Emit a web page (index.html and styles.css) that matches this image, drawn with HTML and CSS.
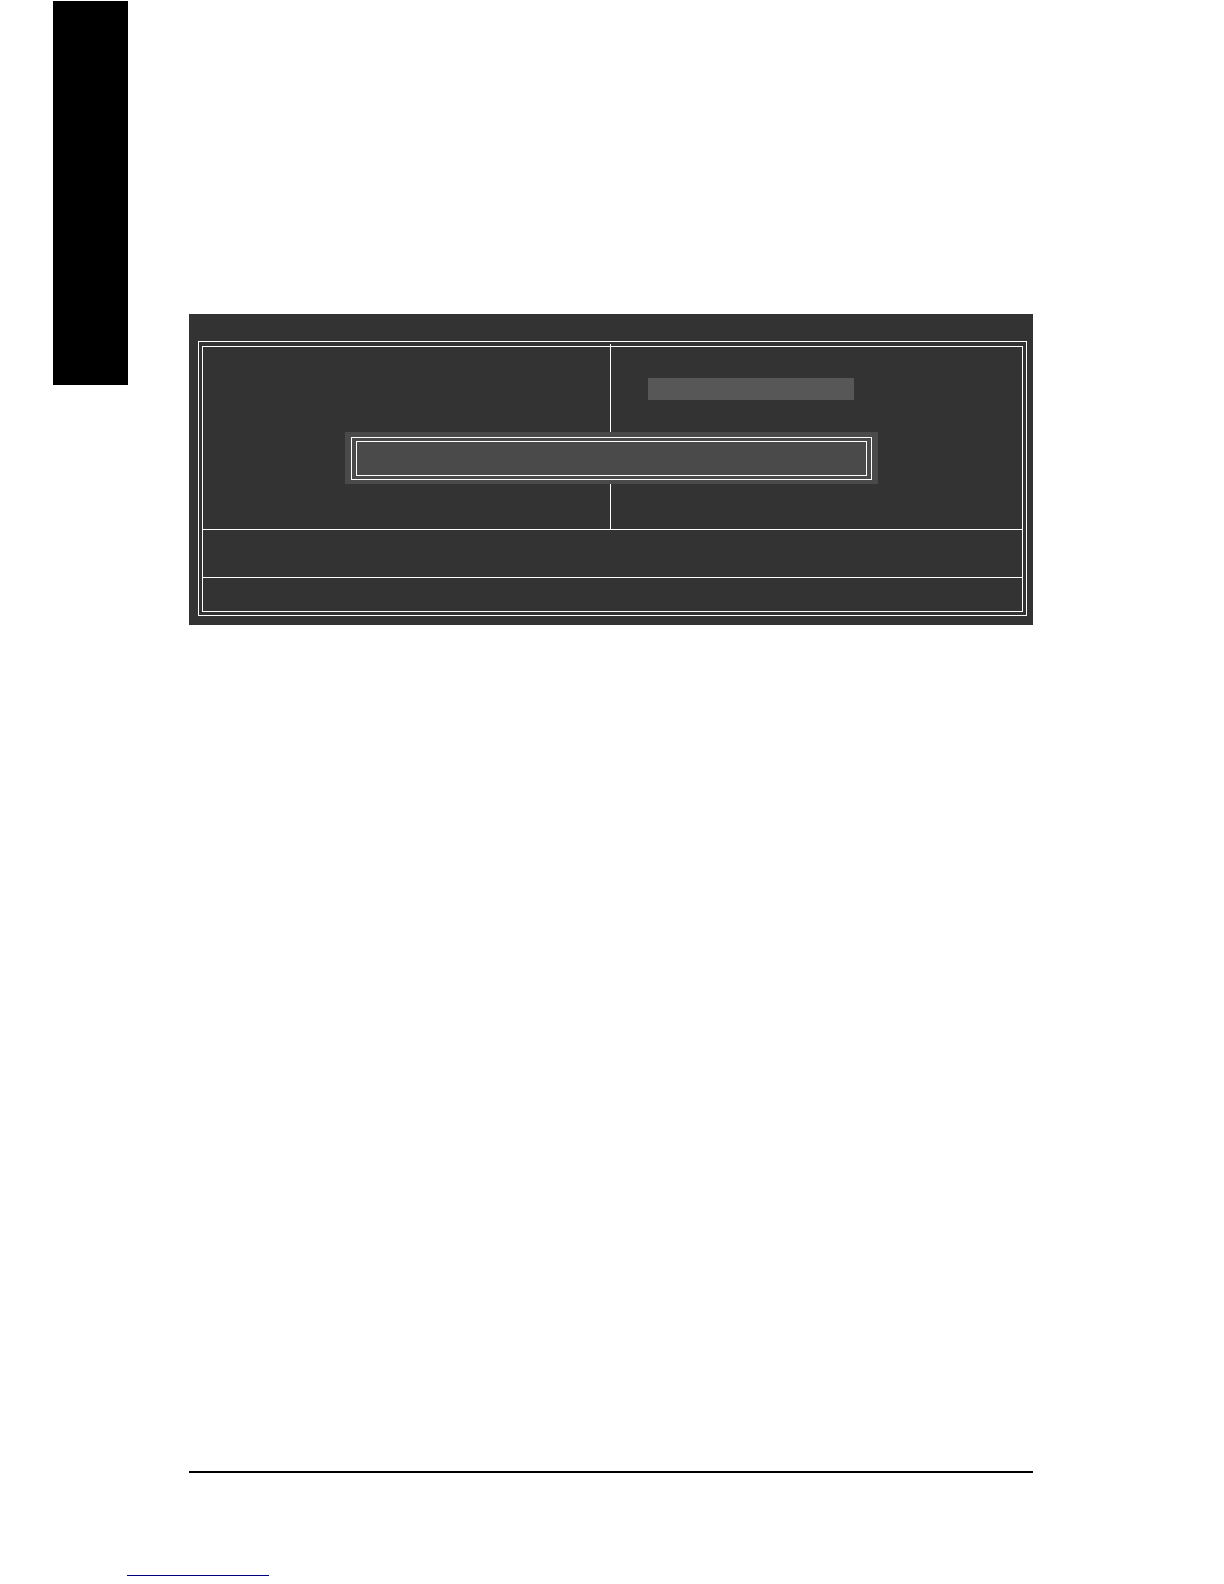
FILE: index.html
```html
<!DOCTYPE html>
<html lang="en">
<head>
<meta charset="utf-8">
<link rel="stylesheet" href="styles.css">
</head>
<body>
<div class="page">
  <div class="body">
    <aside class="tab"></aside>
    <main class="content">
      <section class="screen">
        <div class="frame">
          <div class="frame-inner">
            <div class="menu">
              <div class="menu-left"></div>
              <div class="menu-right"><div class="selected"></div></div>
            </div>
            <div class="keys"></div>
            <div class="hint"></div>
            <div class="prompt">
              <div class="prompt-frame"><div class="prompt-inner"></div></div>
            </div>
          </div>
        </div>
      </section>
    </main>
  </div>
  <footer class="footer">
    <hr class="rule">
    <a class="link" href="#"></a>
  </footer>
</div>
</body>
</html>
```

FILE: styles.css
```css
* {
  box-sizing: border-box;
}

body {
  margin: 0;
  background: #fff;
  font-family: "Liberation Sans", Arial, sans-serif;
}

.page {
  display: flex;
  flex-direction: column;
  min-height: 100vh;
}

.body {
  display: flex;
  flex: 1;
  align-items: flex-start;
  gap: 61px;
  padding: 1px 191px 0 53px;
}

.tab {
  flex: none;
  width: 75px;
  height: 384px;
  background: #000;
}

.content {
  flex: 1;
  padding-top: 313px;
}

/* BIOS screen with a double-line frame */
.screen {
  padding: 27px 6px 9px 9px;
  background: #333;
}

.frame {
  padding: 4px 3px 3px;
  border: 1px solid #fff;
}

.frame-inner {
  position: relative;
  border: 1px solid #fff;
}

.menu {
  display: grid;
  grid-template-columns: 408fr 411fr;
  height: 183px;
  border-bottom: 1px solid #fff;
}

/* the divider reaches into the gap between the frame lines */
.menu-left {
  margin-top: -3px;
  border-right: 1px solid #fff;
}

.menu-right {
  padding: 31px 37px;
}

.selected {
  width: 206px;
  height: 22px;
  background: #575757;
}

.keys {
  height: 48px;
  border-bottom: 1px solid #fff;
}

.hint {
  height: 33px;
}

.prompt {
  position: absolute;
  top: 85px;
  left: 142px;
  right: 144px;
  padding: 5px 6px 4px;
  background: #4a4a4a;
}

.prompt-frame {
  padding: 3px 4px;
  border: 1px solid #fff;
}

.prompt-inner {
  height: 35px;
  border: 1px solid #fff;
}

.footer {
  padding: 0 191px 8px 127px;
}

.rule {
  height: 2px;
  margin: 0 0 102px 62px;
  border: 0;
  background: #000;
}

.link {
  display: block;
  width: 142px;
  border-bottom: 1px solid #000080;
}
```
